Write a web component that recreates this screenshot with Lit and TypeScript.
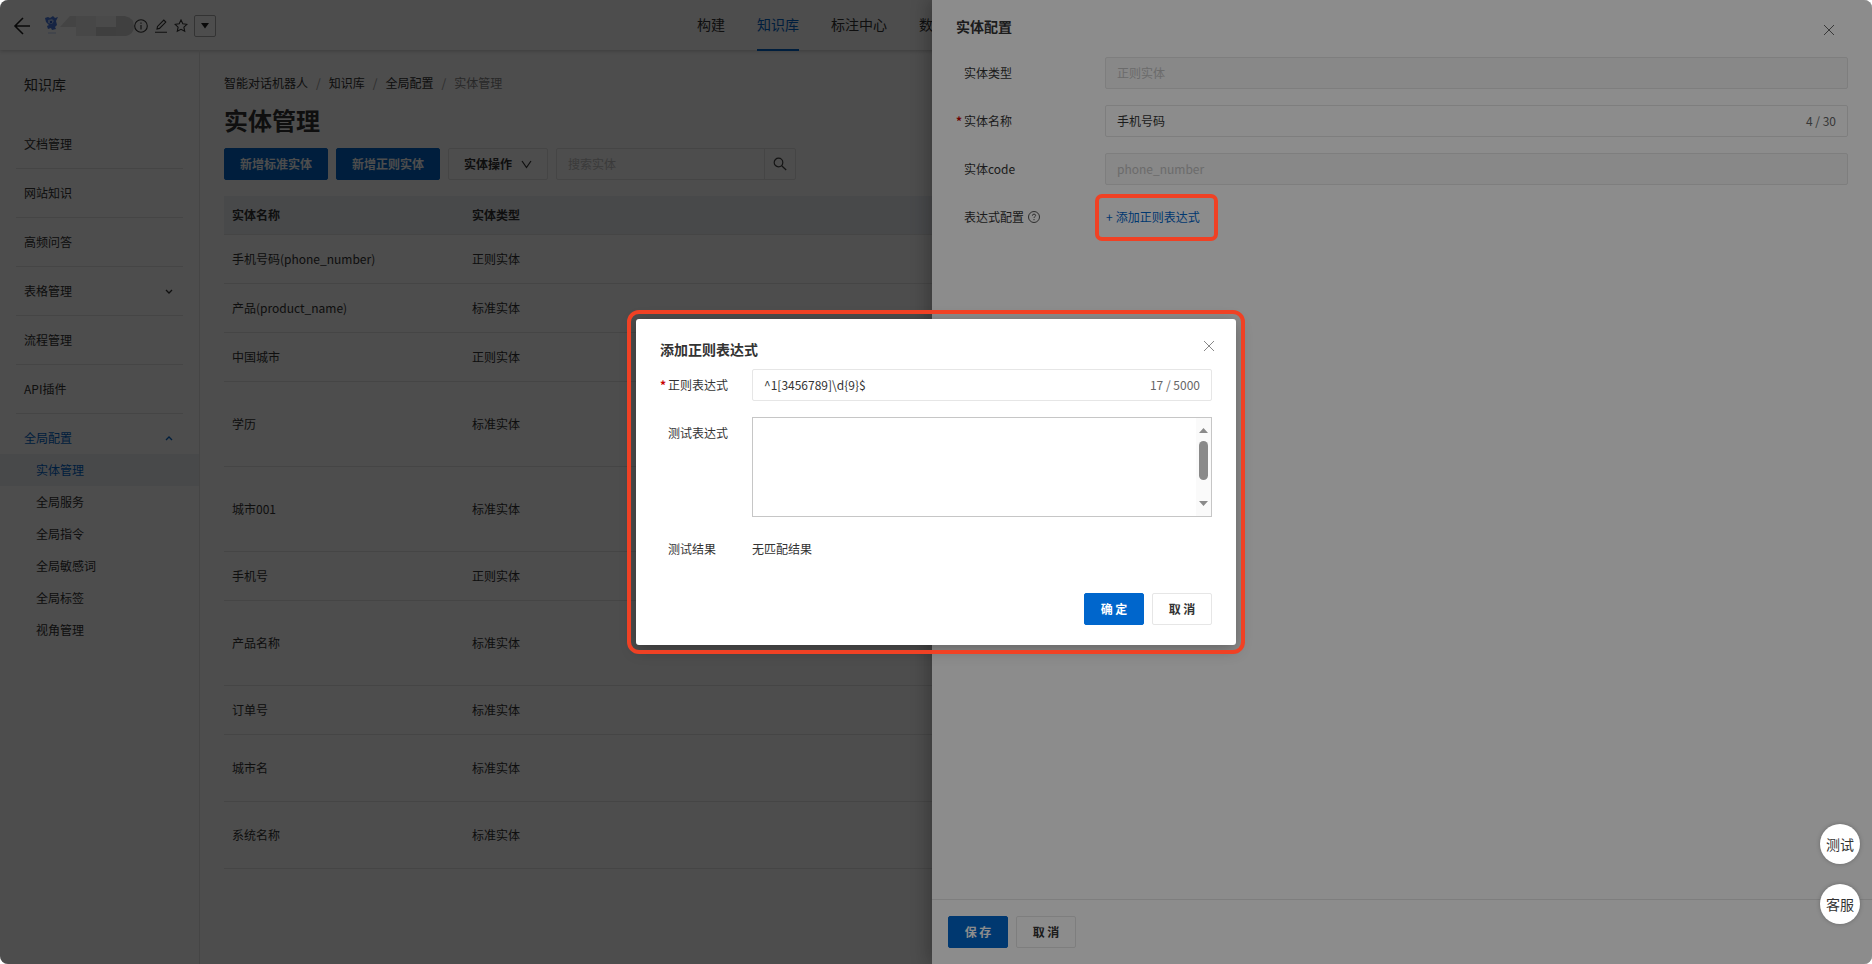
import { LitElement, html, css, svg } from "lit";
import { customElement } from "lit/decorators.js";
import { classMap } from "lit/directives/class-map.js";

const closeIcon = html`<svg width="12" height="12" viewBox="0 0 12 12" fill="none" stroke="currentColor" aria-hidden="true">
  <path d="M1 1l10 10M11 1L1 11" />
</svg>`;

const sideItems = ["文档管理", "网站知识", "高频问答", "表格管理", "流程管理", "API插件"];
const subItems = ["实体管理", "全局服务", "全局指令", "全局敏感词", "全局标签", "视角管理"];
const rows: Array<[string, string, string]> = [
  ["手机号码(phone_number)", "正则实体", "small"],
  ["产品(product_name)", "标准实体", "small"],
  ["中国城市", "正则实体", "small"],
  ["学历", "标准实体", "large"],
  ["城市001", "标准实体", "large"],
  ["手机号", "正则实体", "small"],
  ["产品名称", "标准实体", "large"],
  ["订单号", "标准实体", "small"],
  ["城市名", "标准实体", "medium"],
  ["系统名称", "标准实体", "medium"],
];

@customElement("app-root")
export class AppRoot extends LitElement {
  static styles = css`
    :host {
      display: block;
      background: #fff;
      color: #333;
      font: 12px/16px "Noto Sans CJK SC", sans-serif;
    }
    * { box-sizing: border-box; }
    a { color: inherit; text-decoration: none; }
    h1, h2 { margin: 0; }
    svg { display: block; flex: none; }
    button, input, textarea { font: inherit; color: inherit; margin: 0; }
    input { min-width: 0; }
    button { cursor: pointer; white-space: nowrap; }
    .page {
      position: relative;
      min-height: 100vh;
      border-radius: 8px;
      overflow: hidden;
      background: #fff;
      display: flex;
      flex-direction: column;
    }
    .plain { border: 0; background: none; padding: 0; }

    .topbar {
      height: 50px;
      display: grid;
      grid-template-columns: 697px 1fr;
      box-shadow: 0 1px 4px rgba(0, 0, 0, 0.22);
    }
    .brand { display: flex; align-items: center; padding-left: 13px; }
    .brand .logo { margin-left: 14px; }
    .brand .tools { display: flex; align-items: center; gap: 6px; }
    .plain.caret {
      width: 22px;
      height: 22px;
      border: 1px solid #aaa;
      border-radius: 2px;
      display: grid;
      place-items: center;
    }
    .nav { display: flex; gap: 32px; font-size: 14px; line-height: 48px; }
    .nav .on { color: #06c; box-shadow: inset 0 -2px #06c; height: 51px; }

    .body { flex: 1; display: flex; }
    .side { width: 200px; flex: none; border-right: 1px solid #e8e8e8; }
    .side-title { font-size: 14px; line-height: 18px; padding: 25px 24px 27px; }
    .side-item {
      display: flex;
      justify-content: space-between;
      align-items: center;
      margin: 0 16px;
      padding: 16px 10px 16px 8px;
      border-bottom: 1px solid #e8e8e8;
    }
    .side-item.open { border: 0; padding-bottom: 8px; color: #06c; }
    .sub a { display: block; padding: 8px 36px; }
    .sub .on { background: #eff3f8; color: #06c; }

    .main { flex: 1; min-width: 0; padding: 25px 24px; }
    .crumbs { display: flex; gap: 8px; }
    .crumbs .sep { color: #999; }
    .crumbs .now { color: #888; }
    .main h1 { font-size: 24px; line-height: 34px; padding: 12px 0 10px; }
    .actions { display: flex; gap: 8px; margin-bottom: 16px; padding-top: 1px; }
    .btn {
      height: 32px;
      min-width: 60px;
      border: 1px solid #e6e6e6;
      border-radius: 2px;
      background: #fff;
      padding: 0 15px;
      font-weight: 700;
    }
    .btn.primary { background: #06c; border-color: #06c; color: #fff; }
    .btn.drop { display: flex; align-items: center; gap: 9px; }
    .search { display: flex; width: 240px; height: 32px; border: 1px solid #e6e6e6; border-radius: 2px; }
    .search input { flex: 1; border: 0; background: none; padding: 0 11px; outline: 0; }
    .search input::placeholder { color: #c4c4c4; opacity: 1; }
    .search button { width: 31px; border: 0; border-left: 1px solid #e6e6e6; background: none; padding: 0; display: grid; place-items: center; }

    table { width: 100%; border-collapse: separate; border-spacing: 0; table-layout: fixed; }
    th, td { text-align: left; padding: 0 8px; border-bottom: 1px solid #e8e8e8; }
    th { height: 39px; background: #eff3f8; }
    .col { width: 240px; }
    .small td { height: 49px; }
    .medium td { height: 67px; }
    .large td { height: 85px; }

    .mask { position: absolute; inset: 0; background: rgba(0, 0, 0, 0.45); }
    .drawer {
      position: absolute;
      inset: 0 0 0 auto;
      width: 940px;
      max-width: 100%;
      background: #fff;
      box-shadow: -4px 0 16px rgba(0, 0, 0, 0.25);
      display: flex;
      flex-direction: column;
    }
    .drawer-head, .dialog-head { display: flex; justify-content: space-between; }
    h2 { font-size: 14px; line-height: 18px; }
    .close { color: #666; width: 12px; height: 12px; }
    .drawer-head { padding: 17px 37px 21px 24px; }
    .drawer-head .close { margin-top: 7px; }
    .drawer-form { flex: 1; padding: 0 24px; display: flex; flex-direction: column; gap: 16px; }
    .field { display: grid; grid-template-columns: 149px 1fr; align-items: center; min-height: 32px; }
    .name { display: flex; align-items: center; gap: 4px; padding-left: 8px; position: relative; }
    .name.must::before { content: "*"; position: absolute; left: 0; color: #c80000; font-weight: 700; }
    .box { display: flex; align-items: center; height: 32px; border: 1px solid #e6e6e6; border-radius: 2px; padding: 0 11px; }
    .box input { flex: 1; border: 0; padding: 0; background: none; outline: 0; }
    .box.off { background: #f7f7f7; }
    .box.off input { color: #c4c4c4; }
    .count { color: #666; }
    .add { color: #06c; padding-left: 1px; display: flex; gap: 3px; }
    .drawer-foot { border-top: 1px solid #e6e6e6; padding: 16px; display: flex; gap: 8px; }

    .mark {
      position: absolute;
      top: 194px;
      right: 654px;
      width: 123px;
      height: 47px;
      border: 4px solid #f04124;
      border-radius: 7px;
      pointer-events: none;
    }
    .layer { position: absolute; inset: 0; display: grid; place-items: center; }
    .dialog {
      width: 600px;
      max-width: 100%;
      background: #fff;
      border-radius: 3px;
      outline: 4px solid #f04124;
      outline-offset: 5px;
      box-shadow: 0 4px 16px rgba(0, 0, 0, 0.3);
      padding: 21px 24px 20px;
    }
    .dialog-head { padding-bottom: 11px; }
    .dialog .close { margin: 0 -3px 0 0; color: #888; }
    .dialog .field { grid-template-columns: 92px 1fr; }
    .dialog .field + .field { margin-top: 16px; }
    .dialog .field.top { align-items: start; }
    .field.top .name { padding-top: 8px; }
    .area { position: relative; height: 100px; }
    .area textarea {
      display: block;
      width: 100%;
      height: 100%;
      resize: none;
      outline: 0;
      border: 1px solid #c6c6c6;
      border-radius: 0;
      background: #fff;
      padding: 8px 28px 8px 12px;
      overflow: hidden;
    }
    .bar { position: absolute; top: 1px; right: 1px; bottom: 1px; width: 15px; background: #fafafa; }
    .dialog-foot { display: flex; justify-content: flex-end; gap: 8px; padding-top: 28px; }
    .floats { position: absolute; right: 12px; bottom: 40px; display: grid; gap: 20px; }
    .round { width: 40px; height: 40px; border: 0; border-radius: 50%; background: #fff; padding: 0; font-size: 14px; box-shadow: 0 0 4px rgba(0, 0, 0, 0.25); }
  `;

  render() {
    return html`
      <div class="page">
        <header class="topbar">
          <div class="brand">
            <button class="plain" aria-label="返回">
              <svg width="18" height="18" viewBox="0 0 18 18" fill="none" stroke="#222" stroke-width="1.6"><path d="M10 1L2 9l8 8M2 9h15" /></svg>
            </button>
            <svg class="logo" width="89" height="22" viewBox="0 0 89 22">
              <path d="M0 3l3-1 2 1 3-2 2 2 3-1-2 4 1 4-2 2 1 2-4 1-1-2-3 1-1-3 2-1-3-3z" fill="#4b7be0" />
              <path d="M3 5l4-1 2 2-2 3-4-1z" fill="#a9c3f5" />
              <path d="M5 6h2v2H5z" fill="#2f5fc8" />
              <path d="M3 18h8" stroke="#dbe5fa" stroke-width="2" />
              <path d="M15 12L25 1h6v11z" fill="#e2e2e2" />
              <path d="M31 1h20v20H31z" fill="#ebebeb" />
              <path d="M51 1h20v11H51z" fill="#f8f8f8" />
              <path d="M51 12h20v9H51z" fill="#d2d2d2" />
              <path d="M71 1h9q9 2 9 10t-8 10H71z" fill="#d6d6d6" />
            </svg>
            <div class="tools">
              <button class="plain" aria-label="信息">
                <svg width="14" height="14" viewBox="0 0 14 14" fill="none" stroke="#333" stroke-width="1.1"><circle cx="7" cy="7" r="6.3" /><path d="M7 6v4.500M7 3.4v1.3" /></svg>
              </button>
              <button class="plain" aria-label="编辑">
                <svg width="14" height="14" viewBox="0 0 14 14" fill="none" stroke="#333" stroke-width="1.1"><path d="M1 13.2h12M3 10l.5-2.6L9.8 1.1l2 2L5.500 9.4z" /></svg>
              </button>
              <button class="plain" aria-label="收藏">
                <svg width="14" height="14" viewBox="0 0 14 14" fill="none" stroke="#333" stroke-width="1.1"><path d="M7 1l1.8 3.8 4.1.5-3 2.9.8 4.1L7 10.3l-3.7 2 .8-4.1-3-2.9 4.1-.5z" /></svg>
              </button>
              <button class="plain caret" aria-label="更多">
                <svg width="10" height="6" viewBox="0 0 10 6"><path d="M1 0h8L5 5.500z" fill="#222" /></svg>
              </button>
            </div>
          </div>
          <nav class="nav">
            <a href="#">构建</a><a href="#" class="on">知识库</a><a href="#">标注中心</a><a href="#">数</a>
          </nav>
        </header>
        <div class="body">
          <aside class="side">
            <div class="side-title">知识库</div>
            ${sideItems.map((t) => html`<a href="#" class="side-item">${t}${t === "表格管理" ? this.chevron("M1 2l3 3 3-3") : ""}</a>`)}
            <a href="#" class="side-item open">全局配置${this.chevron("M1 5l3-3 3 3")}</a>
            <div class="sub">
              ${subItems.map((t, i) => html`<a href="#" class=${classMap({ on: i === 0 })}>${t}</a>`)}
            </div>
          </aside>
          <main class="main">
            <div class="crumbs">
              <a href="#">智能对话机器人</a><span class="sep">/</span><a href="#">知识库</a><span class="sep">/</span><a href="#">全局配置</a><span class="sep">/</span><span class="now">实体管理</span>
            </div>
            <h1>实体管理</h1>
            <div class="actions">
              <button class="btn primary">新增标准实体</button>
              <button class="btn primary">新增正则实体</button>
              <button class="btn drop">实体操作
                <svg width="11" height="9" viewBox="0 0 11 9" fill="none" stroke="#333" stroke-width="1.2"><path d="M1 1l4.500 6.500L10 1" /></svg>
              </button>
              <div class="search">
                <input placeholder="搜索实体" aria-label="搜索实体" />
                <button aria-label="搜索">
                  <svg width="14" height="14" viewBox="0 0 14 14" fill="none" stroke="#444" stroke-width="1.2"><circle cx="5.5" cy="5.5" r="4.3" /><path d="M8.7 8.7l4.500 4.300" /></svg>
                </button>
              </div>
            </div>
            <table>
              <thead>
                <tr><th class="col">实体名称</th><th class="col">实体类型</th><th></th></tr>
              </thead>
              <tbody>
                ${rows.map(([name, kind, size]) => html`<tr class=${size}><td>${name}</td><td>${kind}</td><td></td></tr>`)}
              </tbody>
            </table>
          </main>
        </div>

        <div class="mask"></div>
        <section class="drawer" aria-label="实体配置">
          <div class="drawer-head">
            <h2>实体配置</h2>
            <button class="plain close" aria-label="关闭">${closeIcon}</button>
          </div>
          <div class="drawer-form">
            <div class="field">
              <label class="name" for="kind">实体类型</label>
              <div class="box off"><input id="kind" value="正则实体" disabled /></div>
            </div>
            <div class="field">
              <label class="name must" for="title">实体名称</label>
              <div class="box"><input id="title" value="手机号码" /><span class="count">4 / 30</span></div>
            </div>
            <div class="field">
              <label class="name" for="code">实体code</label>
              <div class="box off"><input id="code" value="phone_number" disabled /></div>
            </div>
            <div class="field">
              <div class="name">表达式配置
                <svg width="12" height="12" viewBox="0 0 12 12" fill="none" stroke="#555"><circle cx="6" cy="6" r="5.500" /><path d="M4.4 4.7q0-1.6 1.6-1.6t1.6 1.4q0 .8-.9 1.3-.7.4-.7 1.2M6 8v1.2" /></svg>
              </div>
              <a href="#" class="add"><span>+</span><span>添加正则表达式</span></a>
            </div>
          </div>
          <div class="drawer-foot">
            <button class="btn primary">保 存</button><button class="btn">取 消</button>
          </div>
        </section>

        <div class="mask"></div>
        <div class="mark"></div>
        <div class="layer">
          <section class="dialog" role="dialog" aria-label="添加正则表达式">
            <div class="dialog-head">
              <h2>添加正则表达式</h2>
              <button class="plain close" aria-label="关闭">${closeIcon}</button>
            </div>
            <div class="field">
              <label class="name must" for="regex">正则表达式</label>
              <div class="box"><input id="regex" .value=${"^1[3456789]\\d{9}$"} /><span class="count">17 / 5000</span></div>
            </div>
            <div class="field top">
              <label class="name" for="sample">测试表达式</label>
              <div class="area">
                <textarea id="sample"></textarea>
                <svg class="bar" width="15" height="98" viewBox="0 0 15 98" fill="#8a8a8a" aria-hidden="true">
                  <path d="M3 15l4.500-5 4.500 5zM3 83h9l-4.500 5z" /><rect x="3" y="23" width="9" height="39" rx="4.500" />
                </svg>
              </div>
            </div>
            <div class="field"><div class="name">测试结果</div><div>无匹配结果</div></div>
            <div class="dialog-foot">
              <button class="btn primary">确 定</button><button class="btn">取 消</button>
            </div>
          </section>
        </div>
        <div class="floats">
          <button class="round">测试</button><button class="round">客服</button>
        </div>
      </div>
    `;
  }

  private chevron(d: string) {
    return html`<svg width="8" height="7" viewBox="0 0 8 7" fill="none" stroke="currentColor" stroke-width="1.3">${svg`<path d=${d} />`}</svg>`;
  }
}
